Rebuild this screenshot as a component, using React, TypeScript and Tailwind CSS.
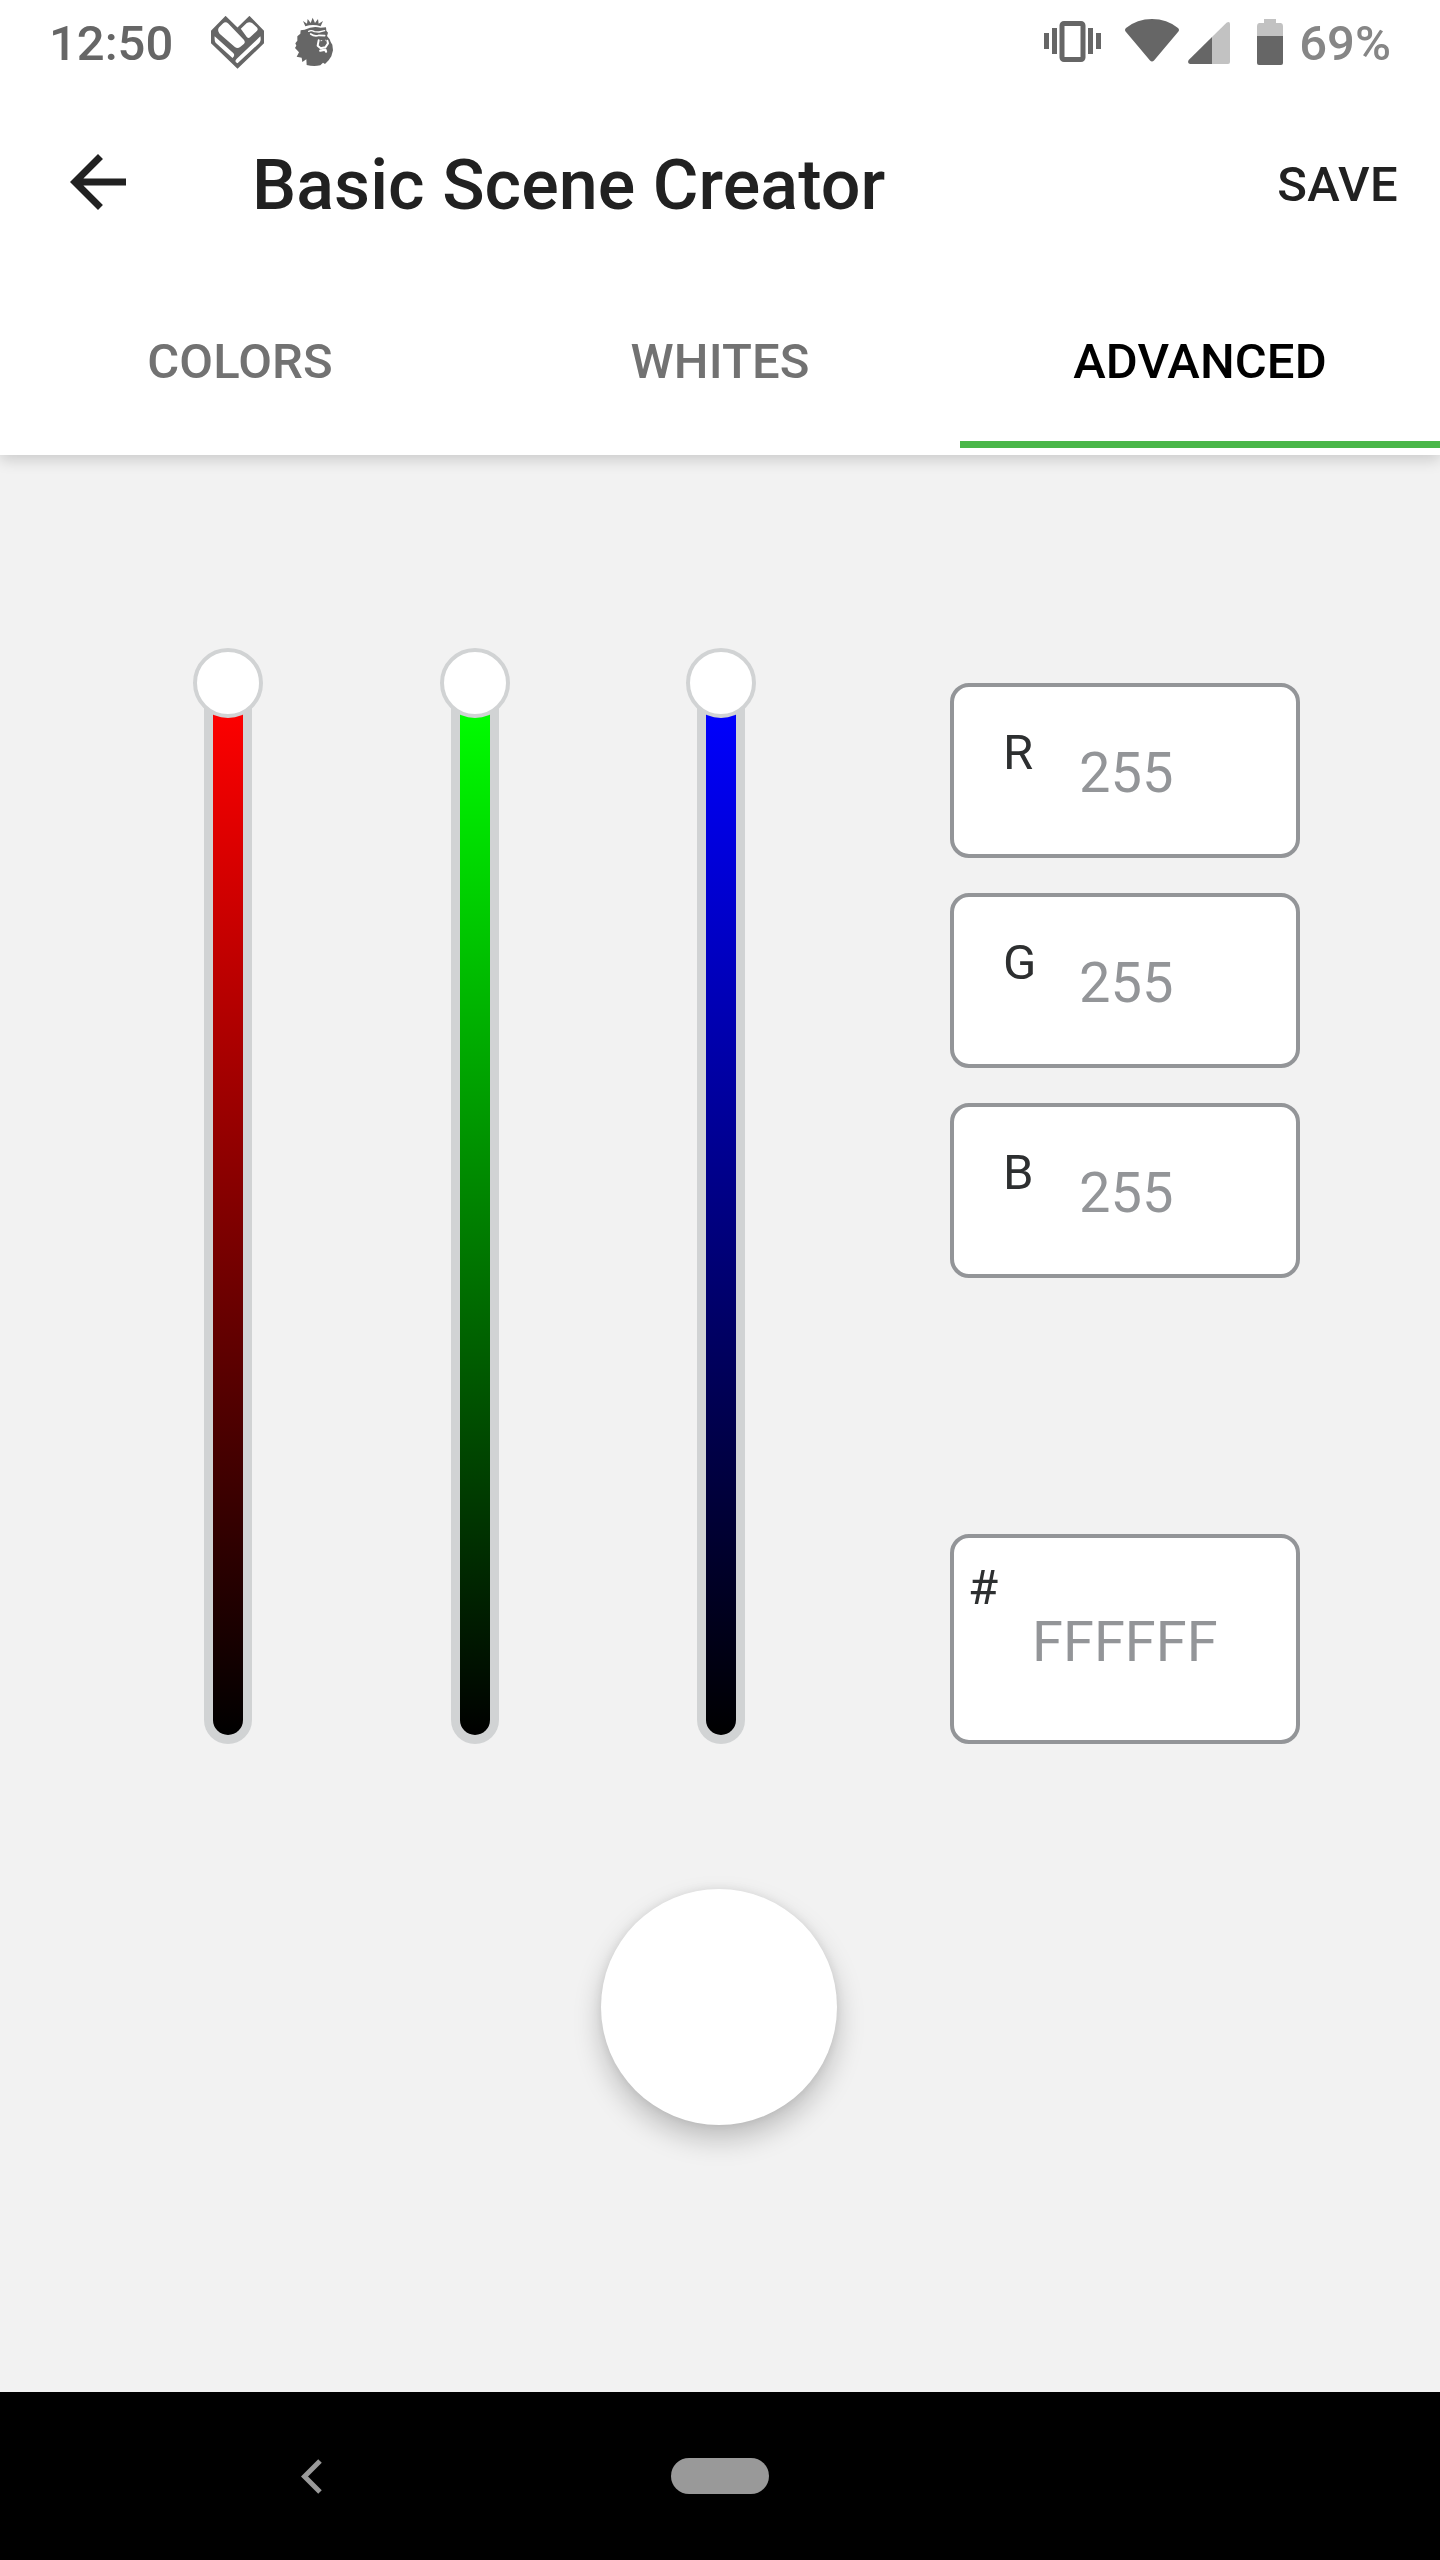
import { useState } from "react";
import clsx from "clsx";

const tabs = ["COLORS", "WHITES", "ADVANCED"];

const channels = [
  { name: "R", value: 255, gradient: "from-[#ff0000]" },
  { name: "G", value: 255, gradient: "from-[#00ff00]" },
  { name: "B", value: 255, gradient: "from-[#0000ff]" },
];

const HeartIcon = () => (
  <svg className="h-[53px] w-[53px]" viewBox="542 48 160 159" fill="#666666">
    <path
      fillRule="evenodd"
      d="M586 47 622 82 658 47 702 92V130L622 207 542 130V92ZM566 82 578 70Q586 63 594 70L641 119Q647 126 641 132L630 141Q622 147 614 141L568 101Q560 91 566 82ZM632 86 650 69Q658 64 666 69L681 82Q685 88 681 92L660 112Q655 116 650 111ZM553 109 609 159Q616 166 607 174L556 128Q552 124 553 109ZM691 109Q694 124 688 129L622 190Q611 186 619 177Z"
    />
  </svg>
);

const LionIcon = () => (
  <svg className="h-[50px] w-[40px]" viewBox="792 51 120 150" fill="#666666">
    <path d="M826 79 819 63 831 71 833 57 842 69 848 53 855 69 864 57 866 71 879 63 872 79Q849 71 826 79Z" />
    <path d="M824 89Q848 77 872 83L888 82 889 92 894 98 891 108 899 118 902 126 907 134 909 151 904 169 896 181 885 192 879 188 871 196Q850 200 830 195L829 178 817 186 815 173 800 170 807 157 795 144 799 137 796 130 802 122 802 109 811 101 812 91Z" />
    <g fill="none" stroke="white" strokeLinecap="round" strokeLinejoin="round">
      <path d="M836 94Q844 89 853 95L867 96 884 92" strokeWidth="4" />
      <path d="M842 102Q854 111 867 106L884 107" strokeWidth="5" />
      <path d="M866 121 863 137 872 145 886 142 894 130 892 122" strokeWidth="6" />
      <path d="M873 122 887 120" strokeWidth="3" />
      <path d="M871 152 886 149 888 155" strokeWidth="7" />
    </g>
    <path d="M871 113 889 114 884 124 876 122Z" />
  </svg>
);

const VibrateIcon = () => (
  <svg className="h-[41px] w-[57px]" viewBox="0 0 57 41" fill="#666666">
    <path d="M0 12h5v16H0zM8 7h5v26H8zM44 7h5v26h-5zM52 12h5v16h-5z" />
    <rect x="18" y="2.5" width="21" height="36" rx="2" fill="none" stroke="#666666" strokeWidth="5" />
  </svg>
);

const WifiIcon = () => (
  <svg className="h-[43px] w-[54px]" viewBox="0 0 54 43" fill="#666666">
    <path d="M1 9Q12 0 27 0T53 9Q55 11 53 13L29 41.5Q27 43.5 25 41.5L1 13Q-1 11 1 9Z" />
  </svg>
);

const SignalIcon = () => (
  <svg className="h-[42px] w-[42px]" viewBox="0 0 42 42">
    <path d="M24 15 38.5 .7Q42-1 42 2V40Q42 42 40 42H24Z" fill="#c2c2c2" />
    <path d="M24 15V42H2Q-1 41 .7 38Z" fill="#666666" />
  </svg>
);

const BatteryIcon = () => (
  <svg className="h-[46px] w-[26px]" viewBox="0 0 26 46">
    <path d="M7 0H19V4H24Q26 4.500 26 7V17H0V7Q0 4.500 2 4H7Z" fill="#c2c2c2" />
    <path d="M0 17H26V44Q26 46 24 46H2Q0 46 0 44Z" fill="#666666" />
  </svg>
);

const StatusBar = () => (
  <div className="flex h-[84px] items-start justify-between pr-[49px] pl-[49px] text-[49px] leading-[88px] font-medium text-[#666666]">
    <div className="flex">
      <span className="w-[162px]">12:50</span>
      <span className="mt-4">
        <HeartIcon />
      </span>
      <span className="mt-[17px] ml-[30px]">
        <LionIcon />
      </span>
    </div>
    <div className="flex">
      <span className="mt-[21px]">
        <VibrateIcon />
      </span>
      <span className="mt-[19px] ml-6">
        <WifiIcon />
      </span>
      <span className="mt-[22px] ml-[9px]">
        <SignalIcon />
      </span>
      <span className="mt-[19px] ml-[27px]">
        <BatteryIcon />
      </span>
      <span className="ml-4 text-[#868686]">69%</span>
    </div>
  </div>
);

interface SliderProps {
  gradient: string;
}

const Slider: React.FC<SliderProps> = ({ gradient }) => (
  <div className="flex w-[70px] flex-col items-center">
    <div className="z-10 h-[70px] w-[70px] shrink-0 rounded-full border-4 border-[#d1d3d4] bg-white" />
    <div className="-mt-9 flex w-12 flex-1 rounded-b-full bg-[#d1d3d4] px-[9px] pb-[9px]">
      <div className={clsx("flex-1 rounded-b-full bg-linear-to-b/srgb from-2% to-black", gradient)} />
    </div>
  </div>
);

const App = () => {
  const [active, setActive] = useState("ADVANCED");

  return (
    <div className="flex h-[2560px] w-[1440px] flex-col overflow-hidden bg-[#f2f2f2] font-['Roboto',sans-serif]">
      <header className="z-10 h-[455px] shrink-0 bg-white shadow-[0_5px_14px_rgba(0,0,0,0.16)]">
        <StatusBar />
        <div className="flex h-[196px] items-center pr-[42px] pl-14 text-[#212121]">
          <button type="button" aria-label="Back">
            <svg className="h-[84px] w-[84px]" viewBox="0 0 24 24" fill="currentColor">
              <path d="M20 11H7.830l5.590-5.590L12 4l-8 8 8 8 1.410-1.410L7.830 13H20v-2z" />
            </svg>
          </button>
          <h1 className="mt-[6px] ml-28 flex-1 text-[70px] leading-none font-medium tracking-[0.07px]">
            Basic Scene Creator
          </h1>
          <button type="button" className="mt-1 text-[49px] leading-none font-medium tracking-[0.3px]">
            SAVE
          </button>
        </div>
        <nav className="grid h-[168px] grid-cols-3">
          {tabs.map((tab) => (
            <button
              key={tab}
              type="button"
              onClick={() => setActive(tab)}
              className={clsx(
                "border-b-[7px] pt-[2px] text-[49px] leading-none font-medium tracking-[0.1px]",
                active === tab ? "border-[#4ab749] text-black" : "border-transparent text-[#727272]"
              )}
            >
              {tab}
            </button>
          ))}
        </nav>
      </header>

      <main className="flex flex-1 flex-col items-center">
        <div className="mt-[193px] flex w-full pl-[193px]">
          <div className="flex h-[1096px] w-[563.4px] justify-between">
            {channels.map((channel) => (
              <Slider key={channel.name} gradient={channel.gradient} />
            ))}
          </div>
          <div className="mt-[35px] ml-[193.6px] flex w-[350px] flex-col gap-[35px]">
            {channels.map((channel) => (
              <label
                key={channel.name}
                className="flex h-[175px] rounded-[19px] border-4 border-[#939598] bg-white leading-none"
              >
                <span className="mt-[41px] w-[74px] pl-[49px] text-[49px] text-[#2d2f30]">{channel.name}</span>
                <span className="mt-[58px] ml-[51px] text-[56px] text-[#939598]">{channel.value}</span>
              </label>
            ))}
            <label className="mt-auto flex h-[210px] rounded-[19px] border-4 border-[#939598] bg-white leading-none">
              <span className="mt-[25px] w-[74px] pl-[14px] text-[49px] text-[#2d2f30]">#</span>
              <span className="mt-[76px] ml-1 text-[56px] text-[#939598]">FFFFFF</span>
            </label>
          </div>
        </div>
        <div className="mt-[145px] mr-[2px] h-[236px] w-[236px] rounded-full bg-white shadow-[0_14px_28px_rgba(0,0,0,0.22),0_0_10px_rgba(0,0,0,0.08)]" />
      </main>

      <footer className="flex h-[168px] shrink-0 items-center bg-black pl-[301px]">
        <svg className="h-[35px] w-[21px]" viewBox="0 0 21 35">
          <path d="M19 2 3.500 17.500 19 33" fill="none" stroke="#999999" strokeWidth="5" />
        </svg>
        <div className="ml-[349px] h-9 w-[98px] rounded-full bg-[#999999]" />
      </footer>
    </div>
  );
};

export default App;
